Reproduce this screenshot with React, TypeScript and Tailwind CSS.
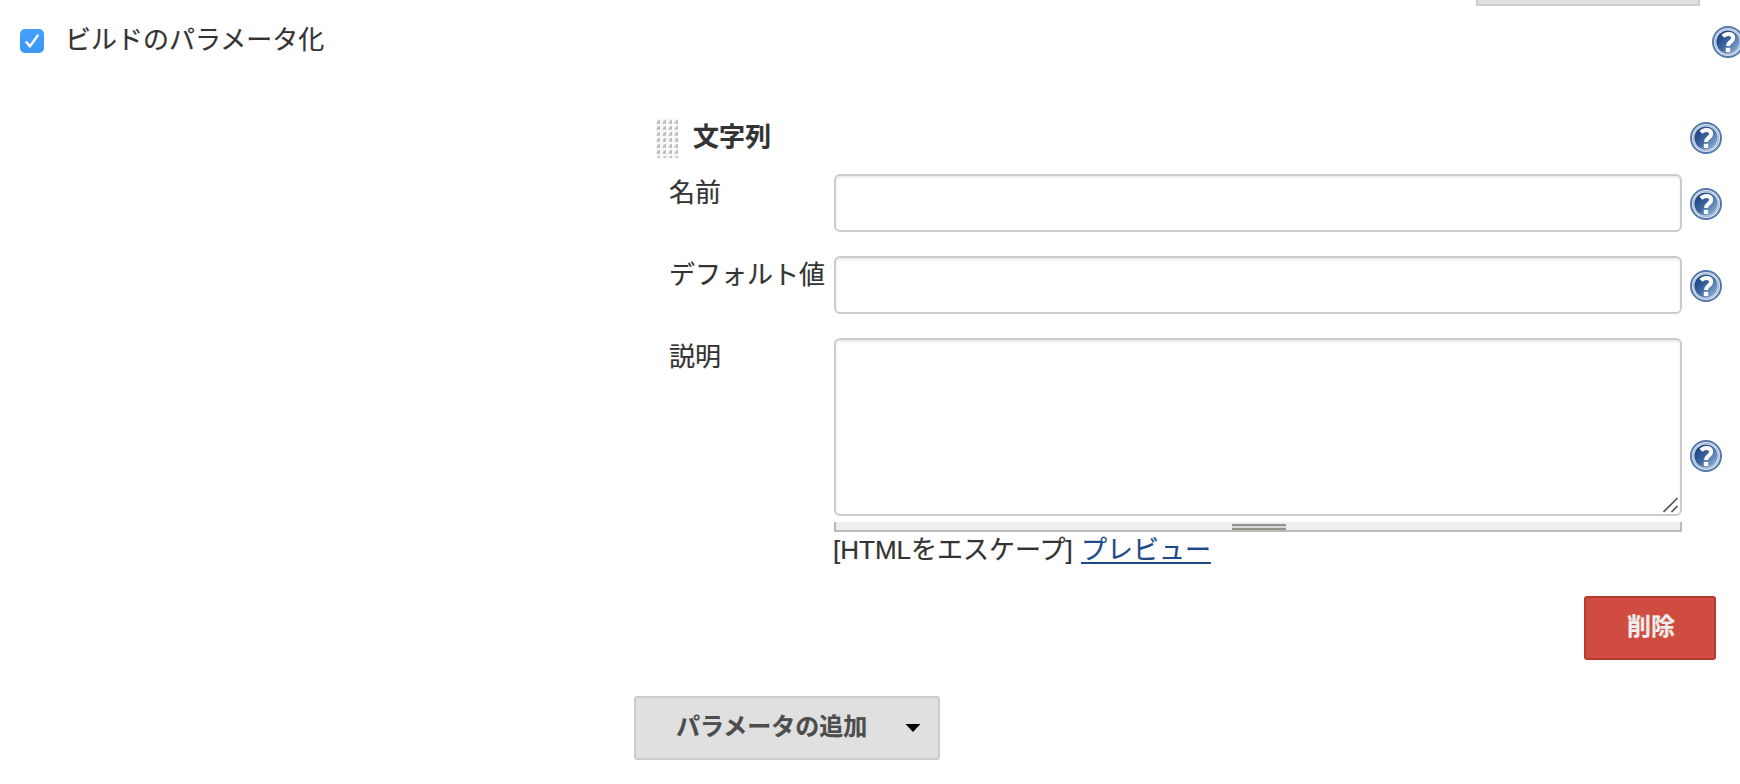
import type { ReactNode } from 'react';

function HelpIcon({ className = '' }: { className?: string }) {
  return (
    <svg viewBox="0 0 32 32" className={`block h-8 w-8 shrink-0 ${className}`} role="img">
      <defs>
        <linearGradient id="help-fill" x1="0.1" y1="0.2" x2="0.9" y2="0.9">
          <stop offset="0" stopColor="#1f4583" />
          <stop offset="0.45" stopColor="#3c66a0" />
          <stop offset="1" stopColor="#8fb0d6" />
        </linearGradient>
      </defs>
      <circle cx="16" cy="16" r="15" fill="#e3eaf3" stroke="#5578ac" strokeWidth="2" />
      <circle cx="16" cy="16" r="12.8" fill="none" stroke="#a3b7d4" strokeWidth="1" />
      <circle cx="16" cy="16" r="11.6" fill="url(#help-fill)" />
      <path
        d="M11 10.400C12.500 8.700 14.500 8 16.300 8c3.200 0 4.900 1.400 4.900 3.700 0 3.900-5.200 3.900-5.200 8.300"
        fill="none"
        stroke="#fff"
        strokeWidth="4"
      />
      <rect x="13.800" y="21.800" width="4.400" height="4.200" fill="#fff" />
    </svg>
  );
}

function DragHandle() {
  return (
    <svg width="22" height="40" className="block shrink-0">
      <defs>
        <pattern id="grip" x="0" y="0" width="6" height="6" patternUnits="userSpaceOnUse">
          <rect width="6" height="6" fill="#f8f8f7" />
          <path d="M0 5.500 4 1.500V5.500Z" fill="#bcbcb9" />
          <rect x="1.500" y="2.500" width="2.500" height="3" fill="#bcbcb9" />
        </pattern>
      </defs>
      <rect width="22" height="40" fill="url(#grip)" />
    </svg>
  );
}

const boxStyle =
  'block w-[848px] shrink-0 rounded-[6px] border-2 border-[#ccc] bg-white shadow-[inset_0_2px_2px_rgba(0,0,0,0.075)] outline-none';

function Field({ label, children }: { label: string; children: ReactNode }) {
  return (
    <div className="flex">
      <label className="w-[165px] shrink-0 whitespace-nowrap leading-[38px]">{label}</label>
      {children}
    </div>
  );
}

export default function App() {
  return (
    <div className="flex h-[784px] w-[1740px] flex-col overflow-hidden bg-white font-['Liberation_Sans','Noto_Sans_CJK_JP',sans-serif] text-[26px] text-[#333] [-webkit-text-stroke:0.2px]">
      <div className="ml-[1476px] h-[6px] w-[224px] shrink-0 rounded-b-[2px] border-2 border-t-0 border-[#ccc] bg-[#e0e0e0]" />

      <div className="flex h-[112px] shrink-0 items-start pl-5">
        <span className="mt-[23px] flex h-6 w-6 items-center justify-center rounded-[5px] bg-linear-to-b from-[#459ffb] to-[#3b97f8]">
          <svg viewBox="0 0 24 24" className="h-6 w-6">
            <path d="M6.500 13.200 10 17.400 17.600 6.600" fill="none" stroke="#fff" strokeWidth="2.500" strokeLinecap="round" strokeLinejoin="round" />
          </svg>
        </span>
        <span className="ml-[21px] mt-[15px] leading-[38px]">ビルドのパラメータ化</span>
        <HelpIcon className="ml-auto mt-5 -mr-1" />
      </div>

      <div className="flex h-[56px] shrink-0 items-start pl-[656px]">
        <DragHandle />
        <span className="ml-[15px] font-bold leading-[38px]">文字列</span>
        <HelpIcon className="ml-auto mr-[18px] mt-1" />
      </div>

      <div className="flex shrink-0 flex-col gap-6 pl-[669px]">
        <Field label="名前">
          <input className={`${boxStyle} h-[58px] px-3`} />
          <HelpIcon className="ml-2 mt-[14px]" />
        </Field>
        <Field label="デフォルト値">
          <input className={`${boxStyle} h-[58px] px-3`} />
          <HelpIcon className="ml-2 mt-[14px]" />
        </Field>
        <Field label="説明">
          <div className="flex flex-col">
            <div className="relative">
              <textarea className={`${boxStyle} h-[178px] resize-none px-3`} />
              <svg viewBox="0 0 16 16" className="absolute bottom-[3px] right-[3px] h-4 w-4">
                <path d="M0.500 15 14.500 1M8.500 15 14.500 9" fill="none" stroke="#555" strokeWidth="1.700" />
              </svg>
            </div>
            <div className="mt-[6px] flex h-[10px] justify-center border-2 border-t-0 border-[#bbbbb6] bg-[#eee]">
              <div className="ml-[2px] mt-[2px] h-[6px] w-[54px] border-y-2 border-[#8f938c] bg-[#d6d8d3]" />
            </div>
            <div className="-ml-px -mt-px mb-px whitespace-nowrap leading-[38px]">
              [HTMLをエスケープ]{' '}
              <a className="ml-px text-[#204a87] underline decoration-2 underline-offset-[3px]">プレビュー</a>
            </div>
          </div>
          <HelpIcon className="ml-2 mt-[102px]" />
        </Field>
      </div>

      <div className="mt-[26px] flex shrink-0 justify-end pr-6">
        <button className="h-16 w-[132px] rounded-[3px] border-2 border-[#b93a30] bg-[#d04b40] pb-[3px] pl-[2px] text-[24px] font-bold text-[#eee]">
          削除
        </button>
      </div>

      <button className="ml-[634px] mt-9 flex h-16 w-[306px] shrink-0 items-center rounded-[3px] border-2 border-[#ccc] bg-[#e0e0e0] pb-[3px] pl-10 text-[24px] font-bold text-[#4d4d4d]">
        パラメータの追加
        <svg viewBox="0 0 16 8" className="ml-[38px] mt-[3px] h-2 w-4">
          <path d="M0.500 0H15.500L8 8Z" fill="#000" />
        </svg>
      </button>
    </div>
  );
}
